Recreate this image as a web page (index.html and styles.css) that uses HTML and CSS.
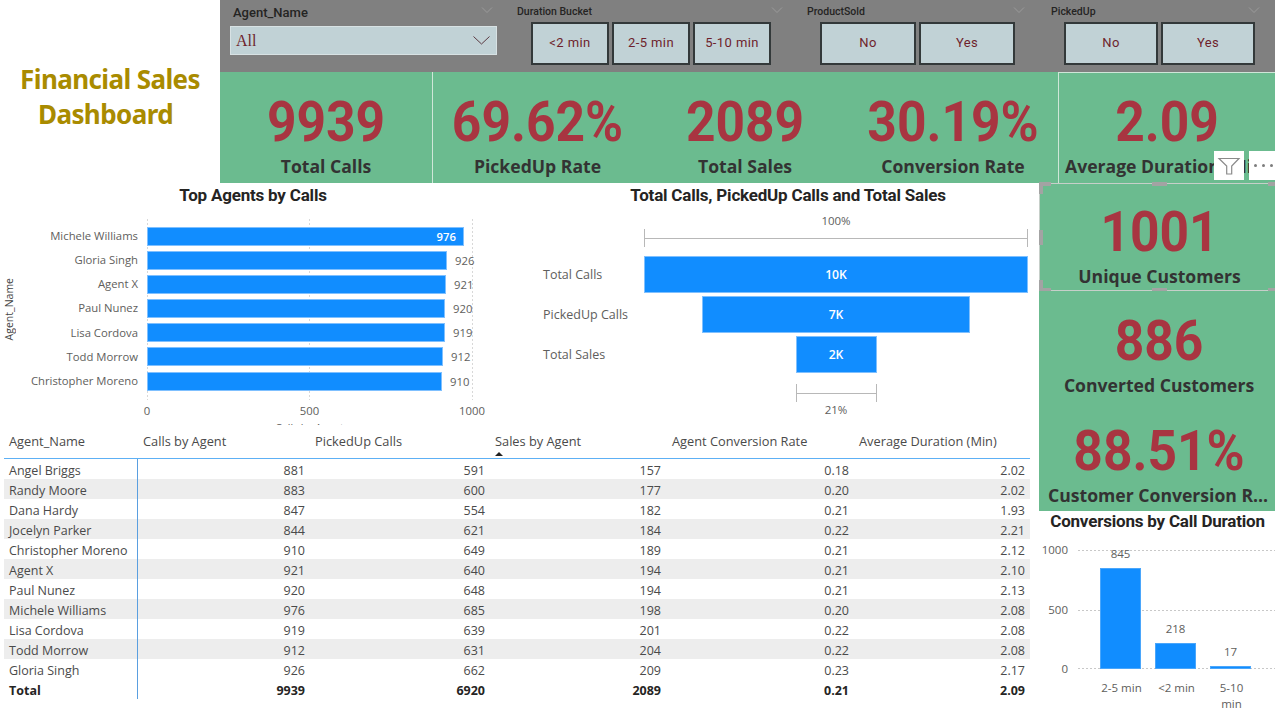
FILE: index.html
```html
<!DOCTYPE html>
<html lang="en">
<head>
  <meta charset="UTF-8" />
  <title>Financial Sales Dashboard</title>
  <link rel="stylesheet" href="styles.css">
</head>
<body>
  <div class="top">
    <h1 class="brand">Financial Sales <span class="brand-second">Dashboard</span></h1>
    <div class="top-right">
      <div class="slicers">
        <div class="slicer slicer-agent">
          <div class="slicer-head"><span class="agent-label">Agent_Name</span><svg class="chev" width="12" height="6" viewBox="0 0 12 6"><path d="M1 .5 6 5.5 11 .5"/></svg></div>
          <div class="dropdown"><span>All</span><svg width="17" height="9" viewBox="0 0 17 9"><path d="M.5 .5 8.5 8 16.5 .5"/></svg></div>
        </div>
        <div class="slicer slicer-duration">
          <div class="slicer-head"><span>Duration Bucket</span><svg class="chev" width="12" height="6" viewBox="0 0 12 6"><path d="M1 .5 6 5.5 11 .5"/></svg></div>
          <div class="btns"><button class="btn">&lt;2 min</button><button class="btn">2-5 min</button><button class="btn">5-10 min</button></div>
        </div>
        <div class="slicer slicer-sold">
          <div class="slicer-head"><span>ProductSold</span><svg class="chev" width="12" height="6" viewBox="0 0 12 6"><path d="M1 .5 6 5.5 11 .5"/></svg></div>
          <div class="btns"><button class="btn">No</button><button class="btn">Yes</button></div>
        </div>
        <div class="slicer slicer-picked">
          <div class="slicer-head"><span>PickedUp</span><svg class="chev" width="12" height="6" viewBox="0 0 12 6"><path d="M1 .5 6 5.5 11 .5"/></svg></div>
          <div class="btns"><button class="btn">No</button><button class="btn">Yes</button></div>
        </div>
      </div>
      <div class="kpis">
        <div class="kpi kpi-1"><div class="kpi-value">9939</div><div class="kpi-label">Total Calls</div></div>
        <div class="kpi kpi-2"><div class="kpi-value">69.62%</div><div class="kpi-label">PickedUp Rate</div></div>
        <div class="kpi kpi-3"><div class="kpi-value">2089</div><div class="kpi-label">Total Sales</div></div>
        <div class="kpi kpi-4"><div class="kpi-value">30.19%</div><div class="kpi-label">Conversion Rate</div></div>
        <div class="kpi kpi-5"><div class="kpi-value">2.09</div><div class="kpi-label kpi-label-left">Average Duration (Min)</div></div>
      </div>
    </div>
  </div>

  <div class="bottom">
    <div class="left">
      <div class="charts">
        <section class="chart-bars">
          <h2 class="chart-title">Top Agents by Calls</h2>
          <div class="bars-body">
            <div class="axis-name"><span>Agent_Name</span></div>
            <div class="bars-main">
              <div class="bars-labels">
                <div>Michele Williams</div>
                <div>Gloria Singh</div>
                <div>Agent X</div>
                <div>Paul Nunez</div>
                <div>Lisa Cordova</div>
                <div>Todd Morrow</div>
                <div>Christopher Moreno</div>
              </div>
              <div class="bars-plot">
                <div class="bar-row"><div class="bar" style="width:317px"><span class="bar-in">976</span></div></div>
                <div class="bar-row"><div class="bar" style="width:300px"></div><span class="bar-out">926</span></div>
                <div class="bar-row"><div class="bar" style="width:299px"></div><span class="bar-out">921</span></div>
                <div class="bar-row"><div class="bar" style="width:298px"></div><span class="bar-out">920</span></div>
                <div class="bar-row"><div class="bar" style="width:298px"></div><span class="bar-out">919</span></div>
                <div class="bar-row"><div class="bar" style="width:296px"></div><span class="bar-out">912</span></div>
                <div class="bar-row"><div class="bar" style="width:295px"></div><span class="bar-out">910</span></div>
              </div>
            </div>
          </div>
          <div class="bars-ticks"><span>0</span><span>500</span><span>1000</span></div>
          <div class="bars-axis-title">Calls by Agent</div>
        </section>

        <section class="chart-funnel">
          <h2 class="chart-title">Total Calls, PickedUp Calls and Total Sales</h2>
          <div class="funnel-pct funnel-pct-top">100%</div>
          <div class="funnel-side">
            <div class="bracket bracket-top"></div>
          </div>
          <div class="funnel-row"><span class="funnel-label">Total Calls</span><div class="funnel-track"><div class="funnel-bar" style="width:384px">10K</div></div></div>
          <div class="funnel-row"><span class="funnel-label">PickedUp Calls</span><div class="funnel-track"><div class="funnel-bar" style="width:268px">7K</div></div></div>
          <div class="funnel-row"><span class="funnel-label">Total Sales</span><div class="funnel-track"><div class="funnel-bar" style="width:81px">2K</div></div></div>
          <div class="funnel-side funnel-side-bottom">
            <div class="bracket bracket-bottom"></div>
          </div>
          <div class="funnel-pct">21%</div>
        </section>
      </div>

      <table class="agents">
        <colgroup>
          <col class="c1"><col class="c2"><col class="c3"><col class="c4"><col class="c5"><col class="c6">
        </colgroup>
        <thead>
          <tr>
            <th>Agent_Name</th>
            <th class="th-rate">Calls by Agent</th>
            <th>PickedUp Calls</th>
            <th class="sorted">Sales by Agent<span class="sort-arrow"></span></th>
            <th class="th-rate">Agent Conversion Rate</th>
            <th>Average Duration (Min)</th>
          </tr>
        </thead>
        <tbody>
          <tr><td>Angel Briggs</td><td>881</td><td>591</td><td>157</td><td>0.18</td><td>2.02</td></tr>
          <tr><td>Randy Moore</td><td>883</td><td>600</td><td>177</td><td>0.20</td><td>2.02</td></tr>
          <tr><td>Dana Hardy</td><td>847</td><td>554</td><td>182</td><td>0.21</td><td>1.93</td></tr>
          <tr><td>Jocelyn Parker</td><td>844</td><td>621</td><td>184</td><td>0.22</td><td>2.21</td></tr>
          <tr><td>Christopher Moreno</td><td>910</td><td>649</td><td>189</td><td>0.21</td><td>2.12</td></tr>
          <tr><td>Agent X</td><td>921</td><td>640</td><td>194</td><td>0.21</td><td>2.10</td></tr>
          <tr><td>Paul Nunez</td><td>920</td><td>648</td><td>194</td><td>0.21</td><td>2.13</td></tr>
          <tr><td>Michele Williams</td><td>976</td><td>685</td><td>198</td><td>0.20</td><td>2.08</td></tr>
          <tr><td>Lisa Cordova</td><td>919</td><td>639</td><td>201</td><td>0.22</td><td>2.08</td></tr>
          <tr><td>Todd Morrow</td><td>912</td><td>631</td><td>204</td><td>0.22</td><td>2.08</td></tr>
          <tr><td>Gloria Singh</td><td>926</td><td>662</td><td>209</td><td>0.23</td><td>2.17</td></tr>
        </tbody>
        <tfoot>
          <tr><td>Total</td><td>9939</td><td>6920</td><td>2089</td><td>0.21</td><td>2.09</td></tr>
        </tfoot>
      </table>
    </div>

    <div class="right">
      <div class="side-kpi side-kpi-selected">
        <div class="kpi-value">1001</div><div class="kpi-label">Unique Customers</div>
        <span class="handle h-tl"></span><span class="handle h-tm"></span><span class="handle h-tr"></span>
        <span class="handle h-ml"></span>
        <span class="handle h-bl"></span><span class="handle h-bm"></span><span class="handle h-br"></span>
      </div>
      <div class="side-kpi side-kpi-2">
        <div class="kpi-value">886</div><div class="kpi-label">Converted Customers</div>
      </div>
      <div class="side-kpi side-kpi-3">
        <div class="kpi-value">88.51%</div><div class="kpi-label kpi-label-cut">Customer Conversion Rate</div>
      </div>
      <section class="chart-cols">
        <h2 class="chart-title chart-title-cols">Conversions by Call Duration</h2>
        <div class="cols-body">
          <div class="cols-y"><span>1000</span><span>500</span><span>0</span></div>
          <div class="cols-plot">
            <div class="col"><span>845</span><div class="col-bar" style="height:101px"></div></div>
            <div class="col"><span>218</span><div class="col-bar" style="height:26px"></div></div>
            <div class="col"><span>17</span><div class="col-bar" style="height:3px"></div></div>
          </div>
        </div>
        <div class="cols-x"><span>2-5 min</span><span>&lt;2 min</span><span>5-10 min</span></div>
      </section>
    </div>
  </div>

  <div class="visual-tools">
    <div class="tool-box tool-filter">
      <svg width="30" height="29" viewBox="0 0 30 29"><path d="M5 7.5H25L17.7 15V23H12.7V15Z"/></svg>
    </div>
    <div class="tool-box tool-more"><i></i><i></i><i></i></div>
  </div>
</body>
</html>
```

FILE: styles.css
```css
* {
  box-sizing: border-box;
}

html, body {
  margin: 0;
  height: 720px;
  overflow: hidden;
}

body {
  position: relative;
  background: #fff;
  font-family: "Open Sans", Arial, sans-serif;
  color: #605e5c;
}

.top {
  display: flex;
  height: 183px;
}

.brand {
  width: 220px;
  margin: 0;
  padding-top: 62px;
  font-family: "Noto Sans", sans-serif;
  font-size: 26px;
  line-height: 35px;
  font-weight: 700;
  letter-spacing: -0.6px;
  color: #a98b00;
  text-align: center;
}

.brand-second {
  display: block;
  padding-right: 9px;
}

.top-right {
  width: 1055px;
}

/* slicers */
.slicers {
  display: flex;
  height: 72px;
  padding-left: 10px;
  background: #808080;
}

.slicer-head {
  display: flex;
  justify-content: space-between;
  height: 22px;
  padding: 5px 2px 0 5px;
  font-family: Roboto, sans-serif;
  font-size: 10.5px;
  line-height: 13px;
  font-weight: 500;
  color: #252423;
}

.chev {
  margin-top: 2px;
  fill: none;
  stroke: #9a9a9a;
}

.agent-label {
  padding-top: 1px;
  font-size: 13px;
  font-weight: 500;
}

.slicer-agent {
  width: 267px;
  margin-right: 15px;
}

.slicer-agent .slicer-head {
  height: 26px;
  padding-left: 3px;
  padding-right: 4px;
}

.slicer-duration {
  width: 273px;
  margin-right: 17px;
}

.slicer-sold {
  width: 225px;
  margin-right: 19px;
}

.slicer-picked {
  width: 216px;
}

.dropdown {
  display: flex;
  justify-content: space-between;
  align-items: center;
  height: 29px;
  padding: 0 6px 0 5px;
  background: #c1d2d6;
  border: 1px solid #d8e2e4;
  font-family: "Liberation Serif", serif;
  font-size: 16px;
  color: #6e1f2c;
}

.dropdown svg {
  fill: none;
  stroke: #5b3a42;
}

.btns {
  display: flex;
  gap: 3px;
}

.slicer-duration .btns {
  margin-left: 19px;
}

.slicer-duration .btn {
  width: 78px;
}

.slicer-sold .btns {
  margin-left: 18px;
}

.slicer-sold .btn {
  width: 96px;
}

.slicer-picked .btns {
  margin-left: 18px;
}

.slicer-picked .btn {
  width: 94px;
}

.btn {
  height: 43px;
  padding: 0 0 2px;
  background: #c1d2d6;
  border: 2px solid #33393a;
  font-family: Roboto, sans-serif;
  font-size: 13px;
  font-weight: 400;
  letter-spacing: 0.4px;
  color: #6e1f2c;
}

/* cards */
.kpis {
  display: grid;
  grid-template-columns: 212px 210px 206px 210px 217px;
  height: 111px;
  background: #6bbb8f;
}

.kpi {
  height: 111px;
  padding-top: 22px;
  text-align: center;
  overflow: hidden;
}

.kpi-2 {
  border-left: 1px solid #cfe6d8;
}

.kpi-5 {
  padding-top: 21px;
  border-left: 1px solid #cfe6d8;
  border-top: 1px solid #cfe6d8;
}

.kpi-value {
  font-family: Roboto, sans-serif;
  font-size: 56px;
  line-height: 56px;
  font-weight: 700;
  color: #a83541;
  transform: scaleX(.92);
}

.kpi-label {
  margin-top: 4px;
  font-family: "Open Sans", sans-serif;
  font-size: 17.6px;
  line-height: 24px;
  font-weight: 700;
  color: #333;
  white-space: nowrap;
}

.kpi-label-left {
  padding-left: 6px;
  text-align: left;
}

.kpi-label-cut {
  width: 224px;
  margin-left: 5px;
  overflow: hidden;
  text-overflow: ellipsis;
}

.bottom {
  display: flex;
  height: 537px;
}

.left {
  width: 1039px;
}

.charts {
  display: flex;
  height: 247px;
}

.chart-title {
  margin: 0;
  padding-bottom: 2px;
  font-family: Roboto, sans-serif;
  font-size: 17px;
  line-height: 24px;
  font-weight: 700;
  letter-spacing: -0.2px;
  text-align: center;
  color: #252423;
}

/* bar chart */
.chart-bars {
  width: 526px;
  height: 242px;
  overflow: hidden;
}

.chart-bars .chart-title {
  width: 506px;
}

.bars-body {
  display: flex;
  height: 181px;
  margin-top: 10px;
}

.axis-name {
  width: 18px;
  display: flex;
  justify-content: center;
  align-items: center;
}

.axis-name span {
  writing-mode: vertical-rl;
  transform: rotate(180deg);
  font-size: 10.5px;
  color: #444;
}

.bars-main {
  display: flex;
}

.bars-labels {
  width: 120px;
  margin-right: 9px;
  padding-top: 5px;
  font-size: 11.3px;
  text-align: right;
}

.bars-labels div {
  height: 24.17px;
  line-height: 24px;
  white-space: nowrap;
}

.bars-plot {
  width: 326px;
  height: 181px;
  padding-top: 5px;
  background-image:
    linear-gradient(#d8d8d8 50%, transparent 50%),
    linear-gradient(#d8d8d8 50%, transparent 50%),
    linear-gradient(#d8d8d8 50%, transparent 50%);
  background-size: 1px 4px;
  background-position: 0 0, 162px 0, 325px 0;
  background-repeat: repeat-y;
}

.bar-row {
  display: flex;
  align-items: center;
  height: 24.17px;
  white-space: nowrap;
}

.bar {
  flex-shrink: 0;
  height: 19px;
  background: #118dff;
  border: 1px solid #7fc0ff;
  text-align: right;
}

.bar-in {
  display: block;
  padding-right: 7px;
  font-size: 11.3px;
  line-height: 17px;
  font-weight: 600;
  color: #fff;
}

.bar-out {
  margin-left: 8px;
  font-size: 11.3px;
}

.bars-ticks {
  display: flex;
  justify-content: space-between;
  width: 365px;
  margin: 3px 0 0 127px;
  font-size: 11.3px;
  line-height: 16px;
}

.bars-ticks span {
  width: 40px;
  text-align: center;
}

.bars-axis-title {
  width: 365px;
  margin: 2px 0 0 127px;
  font-size: 10.5px;
  line-height: 14px;
  text-align: center;
}

/* funnel */
.chart-funnel {
  width: 513px;
}

.chart-funnel .chart-title {
  width: 524px;
}

.funnel-pct {
  margin-left: 118px;
  width: 384px;
  font-size: 11.5px;
  line-height: 16px;
  text-align: center;
}

.funnel-pct-top {
  margin-top: 4px;
}

.funnel-side {
  height: 18px;
  margin: 0 0 7px 118px;
  width: 384px;
}

.funnel-side-bottom {
  margin-top: 10px;
  margin-bottom: 0;
}

.bracket {
  height: 18px;
  margin: 0 auto;
  background: linear-gradient(#b8b8b8, #b8b8b8) center / 100% 1px no-repeat;
  border-left: 1px solid #b8b8b8;
  border-right: 1px solid #b8b8b8;
}

.bracket-top {
  width: 384px;
}

.bracket-bottom {
  width: 81px;
}

.funnel-row {
  display: flex;
  align-items: center;
  height: 40px;
  padding-left: 17px;
}

.funnel-label {
  width: 101px;
  font-size: 12.5px;
  white-space: nowrap;
}

.funnel-track {
  display: flex;
  justify-content: center;
  width: 384px;
}

.funnel-bar {
  height: 37px;
  background: #118dff;
  border: 1px solid #7fc0ff;
  font-size: 12.2px;
  line-height: 36px;
  font-weight: 600;
  text-align: center;
  color: #fff;
}

/* table */
.agents {
  width: 1026px;
  margin-left: 4px;
  border-collapse: collapse;
  table-layout: fixed;
  font-size: 12.5px;
  color: #4a4a4a;
}

.c1 { width: 133px; }
.c2 { width: 173px; }
.c3 { width: 180px; }
.c4 { width: 176px; }
.c5 { width: 188px; }
.c6 { width: 176px; }

.agents th {
  height: 28px;
  padding: 0 5px 6px;
  font-size: 12.8px;
  font-weight: 400;
  text-align: left;
  white-space: nowrap;
  border-bottom: 1px solid #5db0f5;
}

.agents .th-rate {
  padding-left: 6px;
}

.sorted {
  position: relative;
}

.sort-arrow {
  position: absolute;
  left: 5px;
  bottom: 2px;
  width: 0;
  height: 0;
  border-left: 4px solid transparent;
  border-right: 4px solid transparent;
  border-bottom: 4px solid #222;
}

.agents td {
  height: 20px;
  padding: 4px 5px 0;
  line-height: 16px;
  text-align: right;
  white-space: nowrap;
}

.agents td:first-child {
  text-align: left;
  border-right: 1px solid #5a9fe0;
}

.agents tbody tr:nth-child(even) {
  background: #ededed;
}

.agents tfoot td {
  font-weight: 700;
  color: #252423;
}

/* right column */
.right {
  width: 236px;
}

.side-kpi {
  position: relative;
  height: 109px;
  padding: 21px 0 0 4px;
  background: #6bbb8f;
  text-align: center;
}

.side-kpi-selected {
  height: 108px;
  padding-top: 20px;
  border: 1px solid #c6cfc9;
  border-right: 0;
}

.side-kpi-2 {
  padding-top: 22px;
}

.side-kpi-3 {
  padding-top: 23px;
  height: 111px;
}

.handle {
  position: absolute;
  background: #a3a3a3;
}

.h-tl, .h-bl {
  left: -1px;
  width: 12px;
  height: 4px;
}

.h-tl { top: -2px; }
.h-bl { bottom: -2px; }

.h-tl::after, .h-bl::after {
  content: "";
  position: absolute;
  left: 0;
  width: 4px;
  height: 12px;
  background: #a3a3a3;
}

.h-tl::after { top: 0; }
.h-bl::after { bottom: 0; }

.h-tm, .h-bm {
  left: 112px;
  width: 15px;
  height: 4px;
}

.h-tm { top: -2px; }
.h-bm { bottom: -2px; }

.h-tr, .h-br {
  right: 0;
  width: 7px;
  height: 4px;
}

.h-tr { top: -2px; }
.h-br { bottom: -2px; }

.h-ml {
  left: -1px;
  top: 46px;
  width: 4px;
  height: 15px;
}

/* column chart */
.chart-cols {
  height: 209px;
}

.chart-title-cols {
  width: 240px;
  padding: 0 3px 0 0;
  height: 22px;
  line-height: 20px;
}

.cols-body {
  display: flex;
  margin-top: 16px;
}

.cols-y {
  display: flex;
  flex-direction: column;
  justify-content: space-between;
  width: 29px;
  height: 133px;
  margin-top: -6px;
  font-size: 11.5px;
  line-height: 14px;
  text-align: right;
}

.cols-plot {
  display: flex;
  align-items: flex-end;
  gap: 14px;
  width: 197px;
  height: 120px;
  margin-left: 10px;
  padding-left: 22px;
  background-image:
    linear-gradient(90deg, #c8c8c8 50%, transparent 50%),
    linear-gradient(90deg, #c8c8c8 50%, transparent 50%),
    linear-gradient(90deg, #c8c8c8 50%, transparent 50%);
  background-size: 4px 1px;
  background-position: 0 1px, 0 61px, 0 119px;
  background-repeat: repeat-x;
}

.col {
  width: 41px;
  font-size: 11.5px;
  line-height: 14px;
  text-align: center;
}

.col span {
  display: block;
  margin-bottom: 7px;
}

.col-bar {
  background: #118dff;
  border: 1px solid #4aa6fb;
}

.cols-x {
  display: flex;
  gap: 14px;
  margin: 4px 0 0 62px;
  font-size: 11.5px;
  line-height: 16px;
  text-align: center;
}

.cols-x span {
  width: 41px;
  flex: 0 0 41px;
  white-space: normal;
}

.cols-x span:first-child,
.cols-x span:nth-child(2) {
  white-space: nowrap;
}

/* filter and more icons above the selected visual */
.visual-tools {
  position: absolute;
  left: 1214px;
  top: 151px;
  display: flex;
  gap: 5px;
}

.tool-box {
  height: 29px;
  background: #fff;
}

.tool-filter {
  width: 30px;
}

.tool-filter svg {
  display: block;
  fill: none;
  stroke: #8a8a8a;
  stroke-width: 1.2;
}

.tool-more {
  display: flex;
  align-items: center;
  gap: 5px;
  width: 26px;
  padding-left: 5px;
}

.tool-more i {
  width: 3px;
  height: 3px;
  border-radius: 50%;
  background: #7d7d7d;
}
```
